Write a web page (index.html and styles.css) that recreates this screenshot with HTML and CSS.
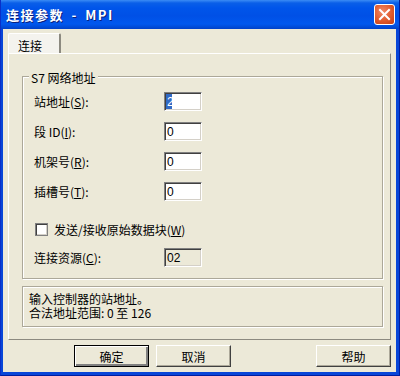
FILE: index.html
```html
<!DOCTYPE html>
<html lang="zh-CN">
<head>
  <meta charset="UTF-8">
  <title>连接参数 - MPI</title>
  <link rel="stylesheet" href="styles.css">
</head>
<body>
  <div class="window">
    <div class="titlebar">
      <span class="title">连接参数 - MPI</span>
      <button class="close" aria-label="关闭">
        <svg width="13" height="13" viewBox="0 0 13 13">
          <path d="M2 2 L11 11 M11 2 L2 11" stroke="#fff" stroke-width="2" stroke-linecap="square"/>
        </svg>
      </button>
    </div>

    <div class="client">
      <div class="tabs">
        <div class="tab">连接</div>
      </div>

      <div class="panel">
        <div class="group">
          <span class="group-title">S7 网络地址</span>
          <div class="rows">
            <label>站地址(<u>S</u>):</label>
            <input class="field selected" type="text" value="2">
            <label>段 ID(<u>I</u>):</label>
            <input class="field" type="text" value="0">
            <label>机架号(<u>R</u>):</label>
            <input class="field" type="text" value="0">
            <label>插槽号(<u>T</u>):</label>
            <input class="field" type="text" value="0">
          </div>
          <div class="check-row">
            <span class="checkbox"></span>
            <span>发送/接收原始数据块(<u>W</u>)</span>
          </div>
          <div class="rows">
            <label>连接资源(<u>C</u>):</label>
            <input class="field readonly" type="text" value="02" readonly>
          </div>
        </div>

        <div class="info">
          <p>输入控制器的站地址。</p>
          <p>合法地址范围: 0 至 126</p>
        </div>
      </div>

      <div class="buttons">
        <button class="btn default">确定</button>
        <button class="btn">取消</button>
        <button class="btn help">帮助</button>
      </div>
    </div>
  </div>
</body>
</html>
```

FILE: styles.css
```css
* {
  margin: 0;
  padding: 0;
  box-sizing: border-box;
}
body {
  width: 400px;
  height: 376px;
  overflow: hidden;
  font-family: "Noto Sans CJK SC", "DejaVu Sans", sans-serif;
  font-size: 12px;
  color: #000;
}
.window {
  width: 400px;
  height: 376px;
  display: flex;
  flex-direction: column;
  background: #0846d8;
  border-left: 1px solid #0a2fc8;
  border-right: 1px solid #001ea0;
  border-bottom: 1px solid #001ea0;
}
.titlebar {
  height: 29px;
  flex: none;
  display: flex;
  align-items: center;
  justify-content: space-between;
  padding: 0 4px 0 5px;
  background: linear-gradient(#3b8cf5 0, #0a5fe8 3px, #0055ea 8px, #0050e6 16px, #0058ee 24px, #0047d0 28px, #0040c8 29px);
}
.title {
  color: #fff;
  font-weight: bold;
  font-size: 13px;
  letter-spacing: 1.5px;
  word-spacing: 3px;
  text-shadow: 1px 1px 0 #0a1f7a;
}
.close {
  width: 21px;
  height: 21px;
  display: flex;
  align-items: center;
  justify-content: center;
  border: 1px solid #fff;
  border-radius: 3px;
  background: radial-gradient(circle at 40% 35%, #f08a68, #e05a2c 55%, #c23d14);
}
.client {
  flex: 1;
  display: flex;
  flex-direction: column;
  background: #ece9d8;
  margin: 0 3px 3px 2px;
  padding: 4px 5px 0 5px;
}
.tabs {
  display: flex;
  height: 20px;
}
.tab {
  width: 53px;
  height: 20px;
  padding: 3px 0 0 9px;
  background: #f4f3ee;
  border-top: 1px solid #fff;
  border-left: 1px solid #fff;
  border-right: 2px solid #8c8a80;
  border-radius: 2px 2px 0 0;
}
.panel {
  height: 287px;
  border-top: 1px solid #fff;
  border-left: 1px solid #fff;
  border-right: 1px solid #8c8a80;
  border-bottom: 1px solid #8c8a80;
  padding: 22px 7px 0 13px;
}
.group {
  position: relative;
  height: 203px;
  border: 1px solid #aca899;
  box-shadow: inset 1px 1px 0 #fff, 1px 1px 0 #fff;
  padding: 15px 0 0 11px;
}
.group-title {
  position: absolute;
  top: -8px;
  left: 6px;
  padding: 0 2px;
  background: #ece9d8;
}
.rows {
  display: grid;
  grid-template-columns: 130px 38px;
  row-gap: 11px;
  align-items: center;
}
.rows label {
  line-height: 19px;
}
.field {
  width: 38px;
  height: 19px;
  border-top: 1px solid #808080;
  border-left: 1px solid #808080;
  border-right: 1px solid #fff;
  border-bottom: 1px solid #fff;
  box-shadow: inset 1px 1px 0 #404040, inset -1px -1px 0 #d4d0c8;
  background: #fff;
  font-family: "Liberation Sans", Arial, sans-serif;
  font-size: 12px;
  padding: 0 2px;
  outline: none;
}
.field.selected {
  color: #fff;
  background: linear-gradient(90deg, #316ac5 0, #316ac5 7px, #fff 7px);
}
.field.readonly {
  background: #ece9d8;
}
.check-row {
  display: flex;
  align-items: center;
  gap: 6px;
  margin: 18px 0 9px 1px;
  height: 20px;
}
.checkbox {
  width: 13px;
  height: 13px;
  border: 1px solid #808080;
  box-shadow: inset 1px 1px 0 #404040, inset -1px -1px 0 #d4d0c8;
  background: #fff;
}
.info {
  height: 41px;
  margin-top: 7px;
  border: 1px solid #aca899;
  box-shadow: inset 1px 1px 0 #fff, 1px 1px 0 #fff;
  padding: 5px 0 0 6px;
  line-height: 14px;
}
.buttons {
  display: flex;
  gap: 7px;
  margin-top: 5px;
  padding-left: 66px;
}
.btn {
  width: 75px;
  height: 22px;
  font-family: "Noto Sans CJK SC", sans-serif;
  font-size: 12px;
  background: #ece9d8;
  border-top: 1px solid #fff;
  border-left: 1px solid #fff;
  border-right: 1px solid #404040;
  border-bottom: 1px solid #404040;
  box-shadow: inset -1px -1px 0 #aca899;
}
.btn.default {
  border: 1px solid #000;
  box-shadow: inset 1px 1px 0 #fff, inset -2px -2px 0 #808080;
}
.btn.help {
  margin-left: auto;
}
```
